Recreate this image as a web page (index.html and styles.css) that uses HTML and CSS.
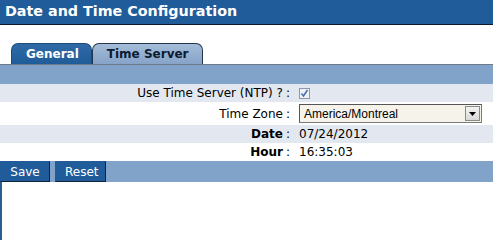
FILE: index.html
```html
<!DOCTYPE html>
<html>
<head>
  <link rel="stylesheet" href="styles.css">
</head>
<body>
<div class="page">
  <header class="title">Date and Time Configuration</header>
  <div class="tabs">
    <span class="tab active">General</span>
    <span class="tab">Time Server</span>
  </div>
  <div class="bar"></div>
  <form class="form">
    <div class="row alt">
      <label class="lbl">Use Time Server (NTP) ?<span class="colon">:</span></label>
      <div class="val"><span class="check"><svg width="9" height="9" viewBox="0 0 9 9"><path d="M1.5 4.5 L3.5 7 L7.5 1" fill="none" stroke="#4a6fb0" stroke-width="1.6"/></svg></span></div>
    </div>
    <div class="row tall">
      <label class="lbl">Time Zone<span class="colon">:</span></label>
      <div class="val">
        <div class="select">
          <span>America/Montreal</span>
          <span class="arrow"><svg width="7" height="4" viewBox="0 0 7 4"><path d="M0 0 H7 L3.5 4 Z" fill="#000"/></svg></span>
        </div>
      </div>
    </div>
    <div class="row alt">
      <label class="lbl bold">Date<span class="colon">:</span></label>
      <div class="val">07/24/2012</div>
    </div>
    <div class="row">
      <label class="lbl bold">Hour<span class="colon">:</span></label>
      <div class="val">16:35:03</div>
    </div>
  </form>
  <div class="buttons">
    <button type="button" class="btn">Save</button>
    <button type="button" class="btn">Reset</button>
  </div>
  <div class="rest"></div>
</div>
</body>
</html>
```
FILE: styles.css
```css
body {
  margin: 0;
  font-family: "DejaVu Sans", Verdana, sans-serif;
  font-size: 12px;
  color: #000;
  background: #fff;
}
.page {
  width: 493px;
  height: 240px;
  overflow: hidden;
}
.title {
  height: 24px;
  background: #1f5c99;
  border-bottom: 1px solid #0a1a2c;
  color: #fff;
  font-weight: bold;
  font-size: 14.3px;
  line-height: 23px;
  padding-left: 5px;
}
/* onglets */
.tabs {
  display: flex;
  gap: 0;
  padding: 18px 0 0 11px;
  height: 21px;
  border-bottom: 1px solid #6f7a88;
}
.tab {
  display: block;
  padding: 0 13px 0 14px;
  line-height: 20px;
  font-weight: bold;
  border: 1px solid #24364d;
  border-bottom: none;
  border-radius: 7px 7px 0 0;
  background: linear-gradient(#a4bcd8, #86a3c8);
  color: #0c1c30;
}
.tab.active {
  background: linear-gradient(#2f6aa6, #1f5c99);
  color: #fff;
  border-color: #1c4a7a;
  padding: 0 12px 0 14px;
}
.bar {
  height: 19px;
  background: #82a3c9;
}
/* lignes du formulaire */
.form {
  margin: 0;
}
.row {
  display: grid;
  grid-template-columns: 291px 1fr;
  height: 18px;
  align-items: center;
  background: #fff;
}
.row.alt {
  background: #e3e8f0;
}
.row.tall {
  height: 23px;
}
.lbl {
  text-align: right;
  padding-right: 1px;
}
.colon {
  margin-left: 3px;
  font-weight: normal;
}
.bold {
  font-weight: bold;
}
.val {
  padding-left: 8px;
}
.check {
  display: flex;
  align-items: center;
  justify-content: center;
  width: 11px;
  height: 11px;
  border: 1px solid #8c98a8;
  background: #eef1f6;
  box-sizing: border-box;
}
.select {
  display: flex;
  align-items: center;
  justify-content: space-between;
  width: 183px;
  height: 19px;
  box-sizing: border-box;
  border: 1px solid #7a7a7a;
  border-left-color: #555;
  border-top-color: #555;
  background: #f6f3ea;
  font-family: "Liberation Sans", Arial, sans-serif;
  font-size: 12px;
  padding-left: 4px;
}
.arrow {
  display: flex;
  align-items: center;
  justify-content: center;
  width: 15px;
  height: 15px;
  margin-right: 1px;
  border: 1px solid #8a8a8a;
  background: linear-gradient(#f4f4f4, #d8d8d8);
  box-sizing: border-box;
}
.buttons {
  display: flex;
  gap: 5px;
  height: 21px;
  background: #82a3c9;
}
.btn {
  margin: 0;
  padding: 0 9px;
  height: 21px;
  font-family: "DejaVu Sans", Verdana, sans-serif;
  font-size: 12px;
  color: #fff;
  background: #1f5c99;
  border: 1px solid #1f5c99;
  border-right-color: #0d2238;
  border-bottom-color: #0d2238;
}
.btn:first-child {
  width: 50px;
}
.btn:last-child {
  width: 51px;
}
.rest {
  height: 60px;
  border-left: 2px solid #2a5d92;
}
```
